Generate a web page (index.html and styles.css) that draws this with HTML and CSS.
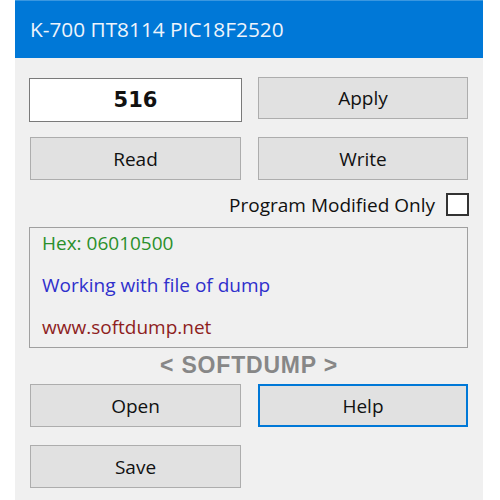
FILE: index.html
```html
<!DOCTYPE html>
<html>
<head>
<meta charset="utf-8">
<link rel="stylesheet" href="styles.css">
</head>
<body>
<div class="window">
  <div class="titlebar">K-700 ПТ8114 PIC18F2520</div>
  <div class="content">
    <div class="row row-top">
      <div class="value-box">516</div>
      <div class="btn btn-apply">Apply</div>
    </div>
    <div class="row row-rw">
      <div class="btn">Read</div>
      <div class="btn">Write</div>
    </div>
    <div class="check-row">
      <span class="check-label">Program Modified Only</span>
      <span class="checkbox"></span>
    </div>
    <div class="log">
      <div class="log-line hex">Hex: 06010500</div>
      <div class="log-line info">Working with file of dump</div>
      <div class="log-line site">www.softdump.net</div>
    </div>
    <div class="brand">&lt; SOFTDUMP &gt;</div>
    <div class="row">
      <div class="btn">Open</div>
      <div class="btn btn-focus">Help</div>
    </div>
    <div class="row row-save">
      <div class="btn">Save</div>
    </div>
  </div>
</div>
</body>
</html>
```
FILE: styles.css
```css
html, body {
  margin: 0;
  padding: 0;
  background: #ffffff;
}
body {
  font-family: "Open Sans", "Noto Sans", sans-serif;
  color: #111;
}
.window {
  margin-left: 15px;
  width: 468px;
  height: 500px;
  background: #f0f0f0;
  overflow: hidden;
}
.titlebar {
  height: 57px;
  border-top: 1px solid #3a97e0;
  background: #0078d7;
  color: #eef4fc;
  font-size: 20.8px;
  line-height: 57px;
  padding-left: 15px;
  white-space: nowrap;
}
.content {
  padding: 0 15px 0 15px;
}
.row {
  display: grid;
  grid-template-columns: 211px 210px;
  column-gap: 17px;
  align-items: start;
}
.row-top {
  margin-top: 19px;
}
.row-rw {
  margin-top: 15px;
}
.row-save {
  margin-top: 18px;
}
.btn {
  box-sizing: border-box;
  height: 43px;
  border: 1px solid #adadad;
  background: #e1e1e1;
  display: flex;
  align-items: center;
  justify-content: center;
  font-size: 19px;
  color: #111;
}
.btn-apply {
  height: 42px;
}
.btn-focus {
  border: 2px solid #0078d7;
}
.value-box {
  box-sizing: border-box;
  margin-top: 1px;
  margin-left: -1px;
  width: 213px;
  height: 44px;
  border: 1px solid #7a7a7a;
  background: #ffffff;
  display: flex;
  align-items: center;
  justify-content: center;
  font-family: "DejaVu Sans", sans-serif;
  font-weight: bold;
  font-size: 21px;
  color: #111;
}
.check-row {
  margin-top: 13px;
  height: 23px;
  display: flex;
  align-items: center;
  justify-content: flex-end;
  gap: 11px;
  margin-right: -1px;
}
.check-label {
  font-size: 19px;
  color: #111;
}
.checkbox {
  box-sizing: border-box;
  width: 23px;
  height: 23px;
  border: 2px solid #333333;
  background: #ffffff;
}
.log {
  box-sizing: border-box;
  margin-top: 11px;
  margin-left: -1px;
  width: 439px;
  height: 121px;
  border: 1px solid #a0a0a0;
  background: #f0f0f0;
  padding: 0 0 0 12px;
  font-size: 19px;
}
.log-line {
  height: 42px;
  line-height: 30px;
}
.hex {
  color: #2a8f2a;
}
.info {
  color: #2f2fcc;
}
.site {
  color: #8e1e1e;
}
.brand {
  height: 36px;
  line-height: 34px;
  text-align: center;
  font-family: "Liberation Sans", Arial, sans-serif;
  font-weight: bold;
  font-size: 23px;
  letter-spacing: 0.8px;
  color: #878787;
}
```
